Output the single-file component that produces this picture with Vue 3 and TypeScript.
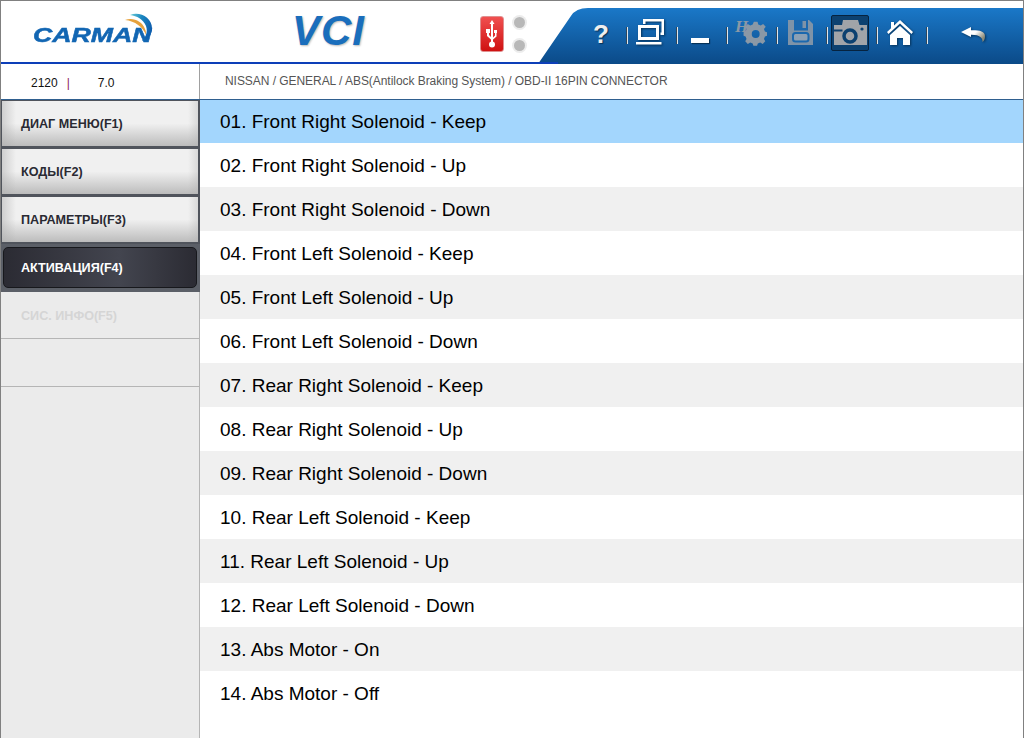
<template>
  <div class="app">
    <header class="top">
      <div class="logo">
        <span class="logo-text">CARMAN</span>
        <svg class="logo-arc" width="34" height="30" viewBox="0 0 34 30">
          <defs>
            <linearGradient id="arc" x1="0" y1="0" x2="1" y2="0.4">
              <stop offset="0" stop-color="#6fd0d8" />
              <stop offset="0.5" stop-color="#1a86c0" />
              <stop offset="1" stop-color="#0f5fae" />
            </linearGradient>
          </defs>
          <path d="M8 2C18-2 31 5 30 17 29 23 25 27 20 28 24 24 26 19 24 13 21 6 15 3 8 2Z" fill="url(#arc)" />
          <path d="M3 7C11 4 20 8 23 16 24 18 24 20 24 22 21 14 13 8 3 7Z" fill="#e6a23c" />
        </svg>
      </div>
      <div class="vci">VCI</div>
      <div class="usb">
        <div class="usb-box">
          <svg width="12" height="28" viewBox="0 0 12 28">
            <path d="M6 0 8.500 4H7v19H5V4H3.500Z" fill="#fff" />
            <circle cx="6" cy="24.500" r="3" fill="#fff" />
            <path d="M5.500 20 1 16v-3H0V9h4v4H3v2l2.500 2.500ZM6.500 18 9 15.500V13H8V10h3v3h-.500v3.500L6.500 20Z" fill="#fff" />
          </svg>
        </div>
        <div class="leds">
          <span class="led"></span>
          <span class="led"></span>
        </div>
      </div>
      <div class="toolbar">
        <svg class="tool-bg" width="486" height="56" viewBox="0 0 486 56" preserveAspectRatio="none">
          <defs>
            <linearGradient id="tb" x1="0" y1="0" x2="0" y2="1">
              <stop offset="0" stop-color="#1a78c8" />
              <stop offset="1" stop-color="#0b4a88" />
            </linearGradient>
          </defs>
          <path d="M0 56 33 8Q38 0 50 0H486V56Z" fill="url(#tb)" />
        </svg>
        <div class="tools">
          <button v-for="(tool, i) in tools" :key="tool" class="tool" :class="{ selected: tool === 'camera' }" :style="{ width: toolWidths[i] + 'px' }">
            <span v-if="tool === 'help'" class="help">?</span>
            <svg v-else-if="tool === 'windows'" width="30" height="28" viewBox="0 0 30 28" class="shadowed">
              <path d="M7 0h21v16h-3.500v-2.500H25.500V2.500H9.500V5H7Z" fill="#fff" />
              <path d="M2 6h21v15H2Zm3 3v9h15V9Z" fill="#fff" fill-rule="evenodd" />
              <path d="M0 23h25.500v2.500H0Z" fill="#fff" />
            </svg>
            <span v-else-if="tool === 'min'" class="min"></span>
            <svg v-else-if="tool === 'settings'" class="gear" width="34" height="32" viewBox="0 0 34 32">
              <text x="1" y="15" class="h-mark">H</text>
              <path d="M19.700 6h4l.8 3 2.600 1 2.700-1.500 2.800 2.800L30.700 14l1 2.500 2.300.8v4l-2.300.7-1 2.600 1.400 2.700-2.800 2.800-2.700-1.500-2.600 1-.8 2.400h-4l-.8-2.400-2.600-1-2.700 1.500-2.800-2.800 1.400-2.700-1-2.600-2.200-.7v-4l2.200-.8 1-2.500-1.400-2.700 2.800-2.800 2.700 1.500 2.600-1Zm2 9a4.300 4.300 0 1 0 0 8.600 4.300 4.300 0 0 0 0-8.600Z" fill="#8a98a6" fill-rule="evenodd" transform="translate(21.700 17) scale(.92) translate(-21.700 -19.300)" />
            </svg>
            <svg v-else-if="tool === 'save'" width="26" height="26" viewBox="0 0 26 26">
              <path d="M0 0h21l4 4v21H0Z" fill="#7e93a8" />
              <path d="M6 0h14v10.500H6Z" fill="#1b68ae" />
              <path d="M14.500 1H18v7h-3.500Z" fill="#7e93a8" />
              <rect x="5" y="13" width="15.500" height="8.500" rx="2.500" fill="#8ca0b4" stroke="#1b68ae" stroke-width="2" />
            </svg>
            <svg v-else-if="tool === 'camera'" width="34" height="28" viewBox="0 0 34 28">
              <path d="M0 6h8l1-5h15l1.500 5H33v20H0Z" fill="#a1a4a8" />
              <path d="M0 10.500h8.500v2H0Z" fill="#0c4170" />
              <circle cx="16" cy="17" r="6" fill="none" stroke="#0c4170" stroke-width="3.500" />
              <circle cx="28" cy="10" r="1.600" fill="#0c4170" />
            </svg>
            <svg v-else-if="tool === 'home'" width="28" height="28" viewBox="0 0 28 28" class="shadowed">
              <path d="M13 1 26 13l-1.500 2L13 4.500 1.500 15 0 13 4 9.300V3h3v3.500Z" fill="#fff" />
              <path d="M13 7 23 16v10h-7v-7h-6v7H3V16Z" fill="#fff" />
            </svg>
            <svg v-else width="28" height="24" viewBox="0 0 28 24" class="shadowed">
              <defs>
                <linearGradient id="bk" x1="0" y1="0" x2="1" y2="0.6">
                  <stop offset="0.6" stop-color="#fff" />
                  <stop offset="1" stop-color="#8a8a78" />
                </linearGradient>
              </defs>
              <path d="M2 11 12 6v3.200C20 9 26 10 26 15c0 3-1 5-2.500 6 .5-4-3-7.500-11.500-7.300V16Z" fill="url(#bk)" />
            </svg>
            <span v-if="i < tools.length - 1" class="sep"></span>
          </button>
        </div>
      </div>
    </header>

    <div class="info">
      <div class="status">
        <span class="num">2120</span>
        <span class="bar">|</span>
        <span class="ver">7.0</span>
      </div>
      <div class="path">NISSAN / GENERAL / ABS(Antilock Braking System) / OBD-II 16PIN CONNECTOR</div>
    </div>

    <main class="body">
      <aside class="side">
        <div
          v-for="item in menu"
          :key="item.label"
          class="menu-item"
          :class="item.state"
        >
          <span>{{ item.label }}</span>
        </div>
      </aside>
      <ul class="list">
        <li v-for="(row, i) in rows" :key="row" class="row" :class="{ active: i === 0 }">{{ row }}</li>
      </ul>
    </main>
  </div>
</template>

<script setup lang="ts">
const tools = ["help", "windows", "min", "settings", "save", "camera", "home", "back"];
const toolWidths = [50, 50, 50, 50, 50, 50, 50, 94];

const menu = [
  { label: "ДИАГ МЕНЮ(F1)", state: "normal" },
  { label: "КОДЫ(F2)", state: "normal" },
  { label: "ПАРАМЕТРЫ(F3)", state: "normal" },
  { label: "АКТИВАЦИЯ(F4)", state: "current" },
  { label: "СИС. ИНФО(F5)", state: "off" },
  { label: "", state: "off" },
];

const rows = [
  "01. Front Right Solenoid - Keep",
  "02. Front Right Solenoid - Up",
  "03. Front Right Solenoid - Down",
  "04. Front Left Solenoid - Keep",
  "05. Front Left Solenoid - Up",
  "06. Front Left Solenoid - Down",
  "07. Rear Right Solenoid - Keep",
  "08. Rear Right Solenoid - Up",
  "09. Rear Right Solenoid - Down",
  "10. Rear Left Solenoid - Keep",
  "11. Rear Left Solenoid - Up",
  "12. Rear Left Solenoid - Down",
  "13. Abs Motor - On",
  "14. Abs Motor - Off",
];
</script>

<style>
html,
body {
  margin: 0;
  background: #fff;
}
</style>

<style scoped>
.app {
  box-sizing: border-box;
  width: 1024px;
  height: 738px;
  border: 1px solid #808080;
  border-bottom: 0;
  display: flex;
  flex-direction: column;
  overflow: hidden;
  font-family: "Liberation Sans", Arial, sans-serif;
  background: #fff;
}

.top {
  height: 63px;
  flex: none;
  display: flex;
  box-sizing: border-box;
  padding-top: 7px;
  position: relative;
}

.top::after {
  content: "";
  position: absolute;
  left: 0;
  width: 557px;
  top: 61px;
  height: 2px;
  background: #0d3fb8;
}

.logo {
  width: 199px;
  flex: none;
  position: relative;
  display: flex;
  padding: 14px 0 0 32px;
  box-sizing: border-box;
}

.logo-text {
  font-size: 21px;
  line-height: 26px;
  font-weight: 700;
  font-style: italic;
  color: #1266b3;
  -webkit-text-stroke: 0.5px #1266b3;
  transform: scaleX(1.27);
  transform-origin: left;
}

.logo-arc {
  position: absolute;
  left: 121px;
  top: 5px;
}

.vci {
  width: 280px;
  flex: none;
  font-size: 42px;
  line-height: 46px;
  font-weight: 700;
  font-style: italic;
  color: #1a6ebc;
  padding: 0 0 0 92px;
  box-sizing: border-box;
  letter-spacing: 1px;
  text-shadow: 1px 1px 2px #bbb;
}

.usb {
  display: flex;
  gap: 10px;
  padding-top: 8px;
  flex: none;
}

.usb-box {
  width: 24px;
  height: 36px;
  border-radius: 3px;
  background: linear-gradient(#f05050, #cf1111);
  border: 1px solid #e09090;
  box-sizing: border-box;
  display: flex;
  align-items: center;
  justify-content: center;
}

.leds {
  display: flex;
  flex-direction: column;
  gap: 12px;
  padding-top: 1px;
}

.led {
  width: 11px;
  height: 11px;
  border-radius: 50%;
  background: #b8b8b8;
  box-shadow: 0 0 0 2px #ececec;
}

.toolbar {
  position: absolute;
  left: 537px;
  right: 0;
  top: 7px;
  height: 56px;
}

.tool-bg {
  position: absolute;
  inset: 0;
  width: 100%;
  height: 100%;
}

.tools {
  position: relative;
  display: flex;
  padding: 7px 0 0 38px;
}

.tool {
  position: relative;
  height: 36px;
  padding: 0;
  border: 0;
  background: none;
  display: flex;
  align-items: center;
  justify-content: center;
}

.tool svg {
  display: block;
}

.tool svg.gear {
  overflow: visible;
}

.tool.selected::before {
  content: "";
  position: absolute;
  left: 5px;
  width: 38px;
  top: 0;
  height: 36px;
  background: #0c4170;
  border: 1px solid #06233f;
  border-radius: 2px;
  box-sizing: border-box;
}

.tool.selected svg {
  position: relative;
}

.sep {
  position: absolute;
  right: -2px;
  top: 12px;
  width: 1px;
  height: 17px;
  background: #dfe6ec;
  box-shadow: -1px 0 0 #30475c;
}

.help {
  font-size: 26px;
  font-weight: 700;
  color: #eee;
  line-height: 1;
  padding-top: 2px;
  text-shadow: 1px 1px 1px #063258;
  font-family: "Liberation Sans", Arial, sans-serif;
}

.min {
  width: 18px;
  height: 5px;
  background: #fff;
  margin: 15px 2px 0 0;
  box-shadow: 1px 1px 1px #063258;
}

.h-mark {
  font: italic 700 17px "Liberation Serif", serif;
  fill: #8a98a6;
}

.shadowed {
  filter: drop-shadow(1px 1px 1px #063258);
}

.info {
  flex: none;
  display: flex;
  border-bottom: 1px solid #2f5f8f;
  box-sizing: border-box;
  height: 36px;
}

.status {
  width: 199px;
  flex: none;
  box-sizing: border-box;
  border-right: 1px solid #a0a0a0;
  display: flex;
  align-items: center;
  font-size: 12px;
  color: #111;
  padding-left: 30px;
  padding-top: 3px;
}

.bar {
  color: #8b1a5a;
  margin-left: 9px;
}

.ver {
  margin-left: 28px;
}

.path {
  font-size: 12px;
  color: #555;
  padding: 10px 0 0 25px;
  letter-spacing: -0.05px;
}

.body {
  flex: 1;
  display: flex;
  min-height: 0;
}

.side {
  width: 199px;
  flex: none;
  box-sizing: border-box;
  background: #ebebeb;
  border-right: 1px solid #b5b5b5;
}

.menu-item {
  height: 48px;
  box-sizing: border-box;
  display: flex;
  align-items: center;
  padding-left: 20px;
  font-size: 12.6px;
  font-weight: 700;
}

.menu-item.normal {
  color: #2a2a33;
  background: #50545c;
  padding: 1px 2px 2px 1px;
  width: 199px;
}

.menu-item.normal span {
  flex: 1;
  height: 100%;
  display: flex;
  align-items: center;
  padding: 1px 0 0 19px;
  box-sizing: border-box;
  background:
    linear-gradient(90deg, rgba(175, 175, 175, 0.5), rgba(175, 175, 175, 0) 14px),
    linear-gradient(270deg, rgba(175, 175, 175, 0.35), rgba(175, 175, 175, 0) 10px),
    linear-gradient(#f0f0f0 50%, #bcbcbc 100%);
}

.menu-item.current {
  color: #fff;
  background: #5b5f67;
  padding: 3px 3px 4px 2px;
  width: 199px;
}

.menu-item.current span {
  flex: 1;
  height: 100%;
  display: flex;
  align-items: center;
  padding: 1px 0 0 17px;
  background: linear-gradient(90deg, #2b2b33, #43454f 60%, #2b2b33);
  border: 1px solid #17181c;
  border-radius: 5px;
  box-sizing: border-box;
}

.menu-item.off {
  color: #d5d5d5;
  border-bottom: 1px solid #b5b5b5;
  padding-top: 2px;
}

.menu-item.off:nth-child(5) {
  height: 47px;
}

.list {
  flex: 1;
  margin: 0;
  padding: 0;
  list-style: none;
}

.row {
  height: 44px;
  line-height: 46px;
  padding-left: 20px;
  font-size: 19px;
  color: #000;
}

.row:nth-child(odd) {
  background: #f0f0f0;
}

.row:nth-child(even) {
  background: #fff;
}

.row.active {
  height: 43px;
  line-height: 44px;
  background: #a3d6fd;
}

.row:last-child {
  background: #fff;
}
</style>
